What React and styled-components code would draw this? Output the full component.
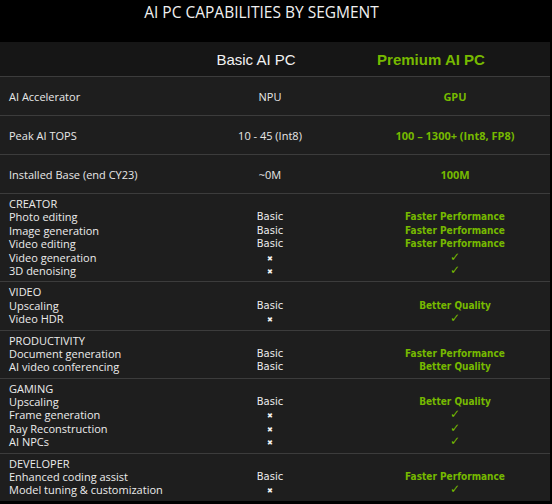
import React from "react";
import styled, { createGlobalStyle } from "styled-components";

const Global = createGlobalStyle`
  html, body { margin: 0; padding: 0; background: #000; }
  body { width: 552px; height: 504px; overflow: hidden; }
`;

const GREEN = "#76b900";

const Page = styled.div`
  width: 552px;
  height: 504px;
  background: #000;
  display: flex;
  flex-direction: column;
  font-family: "Open Sans", sans-serif;
`;

const Title = styled.h1`
  margin: 0;
  height: 42px;
  flex: none;
  padding: 3px 29px 0 0;
  box-sizing: border-box;
  text-align: center;
  color: #f0f0f0;
  font-family: "Open Sans", sans-serif;
  font-weight: 400;
  font-size: 15.5px;
  line-height: 18px;
`;

const Panel = styled.div`
  margin: 0 2px 4px 0;
  background: #1e1e1e;
  display: flex;
  flex-direction: column;
`;

const Grid = styled.div`
  display: grid;
  grid-template-columns: 200px 140px 1fr;
  border-bottom: 1px solid #3c3c3c;
  background: ${(p) => (p.$head ? "#161616" : "#1e1e1e")};
  height: ${(p) => (p.$head ? "34px" : "auto")};
  &:last-child { border-bottom: none; }
`;

const HeadCell = styled.div`
  display: flex;
  align-items: center;
  justify-content: center;
  padding: 0 ${(p) => p.$pr || 0}px 0 ${(p) => p.$pl || 0}px;
  font-family: "Liberation Sans", sans-serif;
  font-size: 15px;
  font-weight: ${(p) => (p.$green ? 700 : 400)};
  color: ${(p) => (p.$green ? GREEN : "#f2f2f2")};
`;

const SingleCell = styled.div`
  height: 38px;
  display: flex;
  align-items: center;
  justify-content: ${(p) => (p.$left ? "flex-start" : "center")};
  padding-left: ${(p) => (p.$left ? 9 : p.$pl || 0)}px;
  font-family: "Open Sans", sans-serif;
  font-size: 11px;
  font-weight: ${(p) => (p.$green ? 700 : 400)};
  color: ${(p) => (p.$green ? GREEN : "#e8e8e8")};
`;

const GroupCell = styled.div`
  display: flex;
  flex-direction: column;
  align-items: ${(p) => (p.$left ? "flex-start" : "center")};
  padding: 3px 0 4px ${(p) => (p.$left ? 9 : p.$pl || 0)}px;
`;

const Line = styled.div`
  height: 13.4px;
  line-height: 13.4px;
  white-space: nowrap;
  font-family: ${(p) =>
    p.$label
      ? '"Open Sans", sans-serif'
      : p.$green
      ? '"DejaVu Sans Condensed", "DejaVu Sans", sans-serif'
      : '"DejaVu Sans", sans-serif'};
  font-size: ${(p) => (p.$label ? "11px" : "10px")};
  font-weight: ${(p) => (p.$green ? 700 : 400)};
  color: ${(p) => (p.$green ? GREEN : "#ececec")};
`;

const Cross = styled.span`
  font-family: "DejaVu Sans", sans-serif;
  font-size: 7px;
  color: #f0f0f0;
  font-weight: 700;
`;

const Check = styled.span`
  font-family: "DejaVu Sans", sans-serif;
  font-size: 12px;
  color: ${GREEN};
  font-weight: 700;
`;

const X = "x";
const C = "c";

const singles = [
  ["AI Accelerator", "NPU", "GPU"],
  ["Peak AI TOPS", "10 - 45 (Int8)", "100 – 1300+ (Int8, FP8)"],
  ["Installed Base (end CY23)", "~0M", "100M"],
];

const groups = [
  {
    name: "CREATOR",
    rows: [
      ["Photo editing", "Basic", "Faster Performance"],
      ["Image generation", "Basic", "Faster Performance"],
      ["Video editing", "Basic", "Faster Performance"],
      ["Video generation", X, C],
      ["3D denoising", X, C],
    ],
  },
  {
    name: "VIDEO",
    rows: [
      ["Upscaling", "Basic", "Better Quality"],
      ["Video HDR", X, C],
    ],
  },
  {
    name: "PRODUCTIVITY",
    rows: [
      ["Document generation", "Basic", "Faster Performance"],
      ["AI video conferencing", "Basic", "Better Quality"],
    ],
  },
  {
    name: "GAMING",
    rows: [
      ["Upscaling", "Basic", "Better Quality"],
      ["Frame generation", X, C],
      ["Ray Reconstruction", X, C],
      ["AI NPCs", X, C],
    ],
  },
  {
    name: "DEVELOPER",
    rows: [
      ["Enhanced coding assist", "Basic", "Faster Performance"],
      ["Model tuning & customization", X, C],
    ],
  },
];

function Value({ v, green }) {
  if (v === X) return <Line><Cross>✖</Cross></Line>;
  if (v === C) return <Line><Check>✓</Check></Line>;
  return <Line $green={green}>{v}</Line>;
}

export default function App() {
  return (
    <>
      <Global />
      <Page>
        <Title>AI PC CAPABILITIES BY SEGMENT</Title>
        <Panel>
          <Grid $head>
            <div />
            <HeadCell $pr={28}>Basic AI PC</HeadCell>
            <HeadCell $green $pl={20} $pr={48}>Premium AI PC</HeadCell>
          </Grid>
          {singles.map(([a, b, c]) => (
            <Grid key={a}>
              <SingleCell $left>{a}</SingleCell>
              <SingleCell>{b}</SingleCell>
              <SingleCell $green $pl={20}>{c}</SingleCell>
            </Grid>
          ))}
          {groups.map((g) => (
            <Grid key={g.name}>
              <GroupCell $left>
                <Line $label>{g.name}</Line>
                {g.rows.map((r) => (
                  <Line $label key={r[0]}>{r[0]}</Line>
                ))}
              </GroupCell>
              <GroupCell>
                <Line />
                {g.rows.map((r, i) => (
                  <Value key={i} v={r[1]} />
                ))}
              </GroupCell>
              <GroupCell $pl={20}>
                <Line />
                {g.rows.map((r, i) => (
                  <Value key={i} v={r[2]} green />
                ))}
              </GroupCell>
            </Grid>
          ))}
        </Panel>
      </Page>
    </>
  );
}
